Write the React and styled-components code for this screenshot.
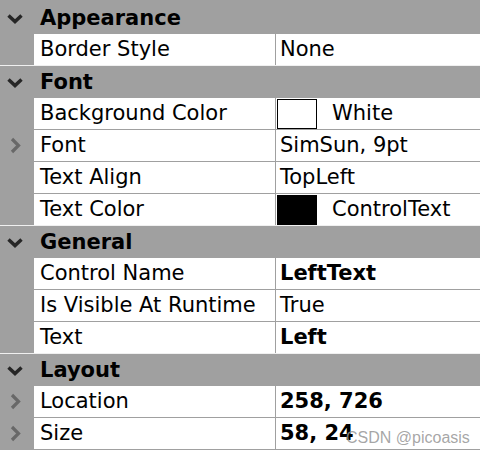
import React from 'react';
import styled, { createGlobalStyle } from 'styled-components';

const GlobalStyle = createGlobalStyle`
  html, body {
    margin: 0;
    padding: 0;
    background: #ffffff;
  }
  body {
    font-family: "DejaVu Sans", Verdana, sans-serif;
    font-size: 21px;
    color: #000;
  }
`;

// 속성 그리드 데이터
const groups = [
  {
    title: 'Appearance',
    rows: [{ name: 'Border Style', value: 'None' }],
  },
  {
    title: 'Font',
    rows: [
      { name: 'Background Color', value: 'White', swatch: '#ffffff' },
      { name: 'Font', value: 'SimSun, 9pt', expand: true },
      { name: 'Text Align', value: 'TopLeft' },
      { name: 'Text Color', value: 'ControlText', swatch: '#000000' },
    ],
  },
  {
    title: 'General',
    rows: [
      { name: 'Control Name', value: 'LeftText', bold: true },
      { name: 'Is Visible At Runtime', value: 'True' },
      { name: 'Text', value: 'Left', bold: true },
    ],
  },
  {
    title: 'Layout',
    rows: [
      { name: 'Location', value: '258, 726', bold: true, expand: true },
      { name: 'Size', value: '58, 24', bold: true, expand: true },
    ],
  },
];

const ChevronDown = () => (
  <svg width="16" height="10" viewBox="0 0 16 10">
    <polyline points="1.5,1.5 8,7.5 14.5,1.5" fill="none" stroke="#262626" strokeWidth="3.5" />
  </svg>
);

const ChevronRight = () => (
  <svg width="11" height="17" viewBox="0 0 11 17">
    <polyline points="2,2 8.5,8.5 2,15" fill="none" stroke="#686868" strokeWidth="3.2" />
  </svg>
);

const PropertyGrid = () => (
  <Grid>
    {groups.map((group, gi) => (
      <React.Fragment key={group.title}>
        <Header $first={gi === 0}>
          <HeaderIcon>
            <ChevronDown />
          </HeaderIcon>
          <HeaderTitle>{group.title}</HeaderTitle>
        </Header>
        {group.rows.map((row, ri) => {
          // 그룹의 마지막 행은 밝은 구분선
          const lastInGroup = ri === group.rows.length - 1 && gi !== groups.length - 1;
          return (
            <Row key={row.name} $light={lastInGroup}>
              <Gutter>{row.expand && <ChevronRight />}</Gutter>
              <NameCell>{row.name}</NameCell>
              <ValueCell $bold={row.bold}>
                {row.swatch && <Swatch $color={row.swatch} />}
                {row.value}
              </ValueCell>
            </Row>
          );
        })}
      </React.Fragment>
    ))}
    <Watermark>CSDN @picoasis</Watermark>
  </Grid>
);

export default function App() {
  return (
    <>
      <GlobalStyle />
      <PropertyGrid />
    </>
  );
}

const Grid = styled.div`
  position: relative;
  width: 480px;
  height: 458px;
  overflow: hidden;
  background: #ffffff;
`;

const Header = styled.div`
  display: flex;
  align-items: center;
  box-sizing: border-box;
  height: ${(p) => (p.$first ? '34px' : '32px')};
  padding-top: ${(p) => (p.$first ? '3px' : '1px')};
  background: #a0a0a0;
`;

const HeaderIcon = styled.div`
  width: 34px;
  display: flex;
  justify-content: center;
  padding-right: 4px;
  box-sizing: border-box;
`;

const HeaderTitle = styled.div`
  padding-left: 6px;
  font-weight: bold;
  line-height: 31px;
`;

const Row = styled.div`
  display: flex;
  height: 31px;
  border-bottom: 1px solid ${(p) => (p.$light ? '#f0f0f0' : '#a0a0a0')};
`;

const Gutter = styled.div`
  width: 34px;
  flex: none;
  background: #a0a0a0;
  display: flex;
  align-items: center;
  padding-left: 10px;
  box-sizing: border-box;
`;

const NameCell = styled.div`
  width: 242px;
  flex: none;
  box-sizing: border-box;
  padding-left: 6px;
  border-right: 1px solid #a0a0a0;
  line-height: 31px;
  white-space: nowrap;
  overflow: hidden;
`;

const ValueCell = styled.div`
  flex: 1;
  display: flex;
  align-items: center;
  padding-left: 4px;
  line-height: 31px;
  font-weight: ${(p) => (p.$bold ? 'bold' : 'normal')};
  white-space: nowrap;
`;

const Swatch = styled.span`
  width: 40px;
  height: 30px;
  box-sizing: border-box;
  border: 1px solid #000;
  background: ${(p) => p.$color};
  margin-left: -3px;
  margin-right: 15px;
`;

const Watermark = styled.div`
  position: absolute;
  left: 346px;
  top: 429px;
  font-family: "Liberation Sans", Arial, sans-serif;
  font-size: 16px;
  color: rgba(150, 150, 150, 0.85);
`;
